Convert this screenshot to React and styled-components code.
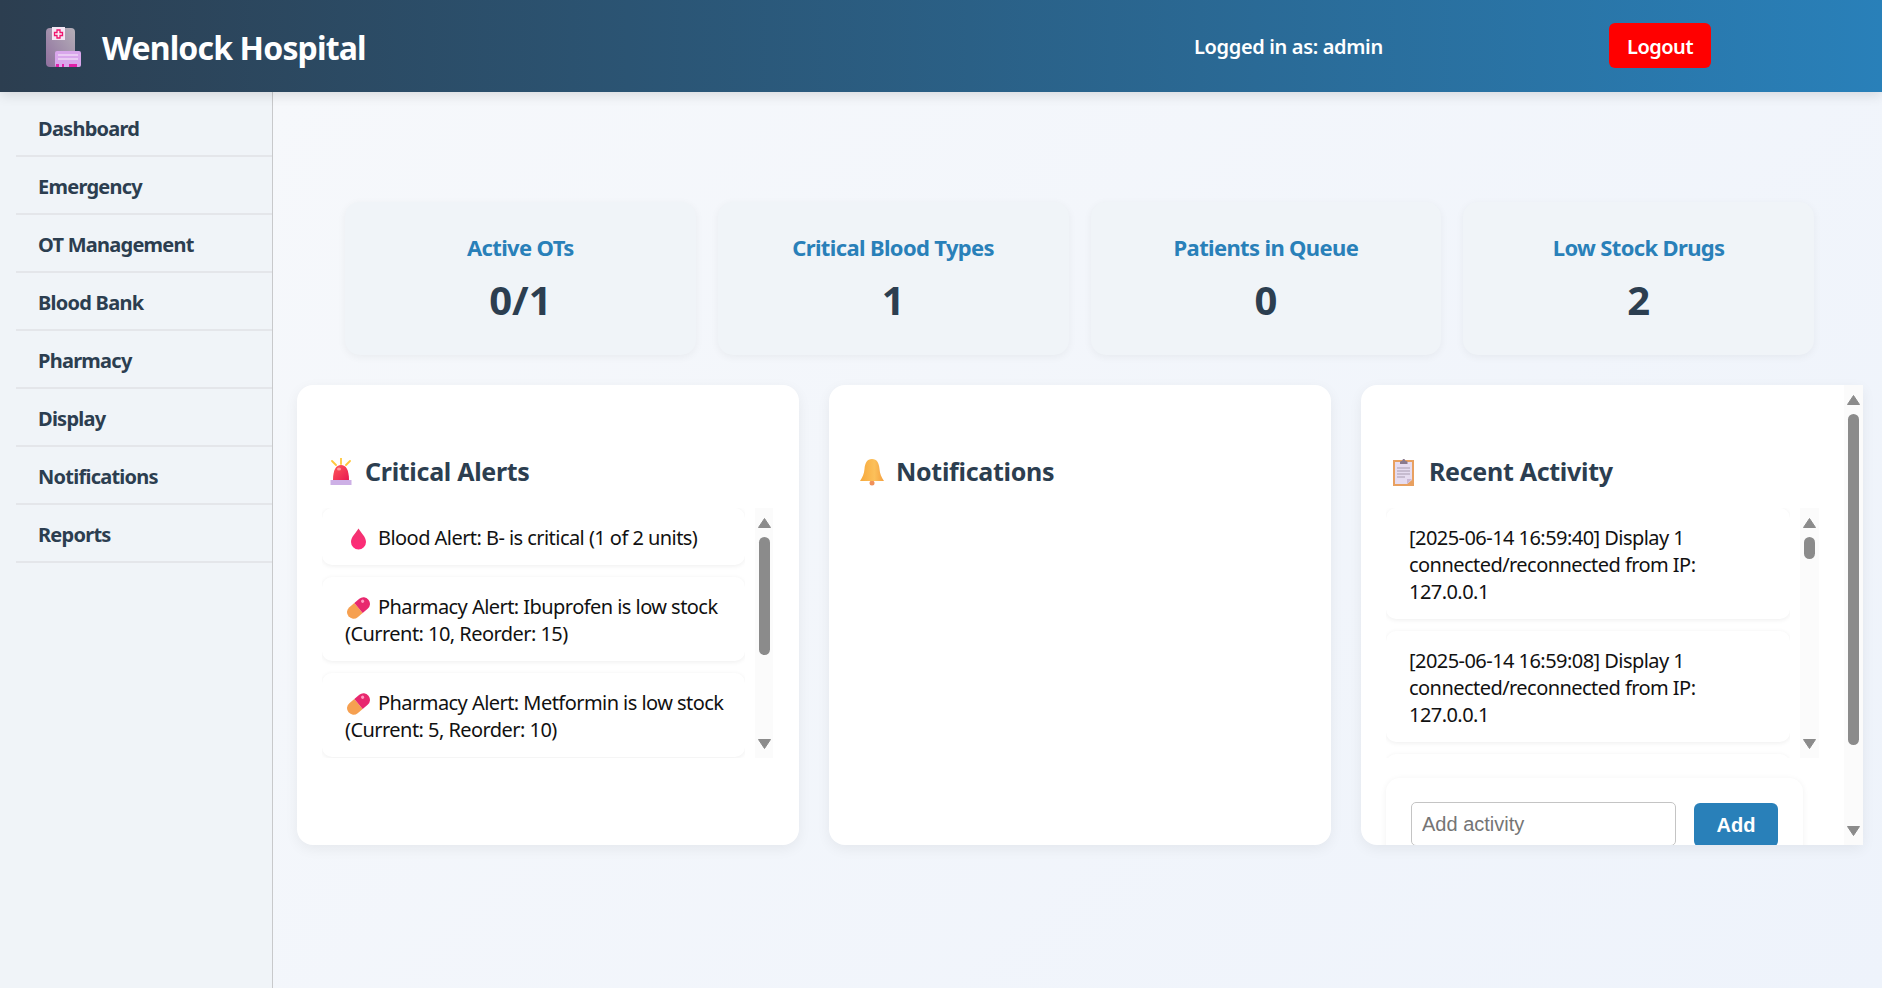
import React from "react";
import styled, { createGlobalStyle } from "styled-components";

const FONT = `"Noto Sans", "Open Sans", sans-serif`;

const Global = createGlobalStyle`
  * { box-sizing: border-box; }
  html, body { margin: 0; height: 100%; overflow: hidden; }
  body { font-family: ${FONT}; color: #2c3e50; background: #f0f4f8; }
`;

const Page = styled.div`display: flex; flex-direction: column; height: 988px; overflow: hidden;`;
const Header = styled.header`
  position: relative; z-index: 2; flex: 0 0 92px; display: flex; align-items: center;
  padding-left: 46px; color: #fff;
  background: linear-gradient(90deg, #2c3e50, #2980b9);
  box-shadow: 0 3px 12px rgba(0,0,0,.12);
`;
const Brand = styled.h1`
  margin: 3px 0 0 20px; font-size: 32px; font-weight: 700; letter-spacing: -0.85px; line-height: 44px;
  width: 1092px; flex: none;
`;
const LoggedIn = styled.span`font-size: 20px; font-weight: 600; letter-spacing: -0.35px; width: 415px; flex: none; margin-top: 1px;`;
const Logout = styled.button`
  width: 102px; height: 45px; margin-top: -2px; padding: 2px 0 0; border: 0; border-radius: 6px; background: #f00; color: #fff;
  font: 600 20px ${FONT}; letter-spacing: -0.5px;
`;
const Body = styled.div`flex: 1; display: flex; min-height: 0;`;
const Sidebar = styled.nav`
  flex: 0 0 273px; padding: 7px 0 0 16px; background: #f0f4f8; border-right: 1px solid #c8c9cb;
`;
const NavItem = styled.div`
  height: 58px; padding: 3px 0 0 22px; display: flex; align-items: center;
  border-bottom: 2px solid #e4e6ea; font-size: 20px; font-weight: 700; letter-spacing: -0.75px; color: #2c3e50;
`;
const Main = styled.main`
  flex: 1; min-width: 0; padding: 110px 0 0 24px;
  background: linear-gradient(135deg, #f6f8fb 0%, #eef3fb 100%);
`;
const Stats = styled.section`
  display: grid; grid-template-columns: repeat(4, 1fr); gap: 22px; width: 1469px; margin-left: 48px;
`;
const StatCard = styled.div`
  height: 153px; padding-top: 29px; text-align: center; background: #f0f4f8; border-radius: 15px;
  box-shadow: 0 2px 8px rgba(0,0,0,.05);
`;
const StatLabel = styled.div`font-size: 22px; font-weight: 700; letter-spacing: -0.65px; color: #2980b9; line-height: 32px;`;
const StatValue = styled.div`font-size: 40px; font-weight: 700; color: #2c3e50; line-height: 54px; margin-top: 10px;`;
const Panels = styled.section`
  display: grid; grid-template-columns: repeat(3, 502px); gap: 30px; margin-top: 30px;
`;
const Panel = styled.div`
  height: 460px; padding: 0 25px; background: #fff; border-radius: 16px;
  box-shadow: 0 4px 14px rgba(0,0,0,.06);
`;
const ScrollPanel = styled.div`
  height: 460px; display: flex; padding-left: 25px; overflow: hidden; background: #fff;
  border-radius: 16px 0 0 16px; box-shadow: 0 4px 14px rgba(0,0,0,.06);
`;
const ScrollContent = styled.div`flex: 1; min-width: 0; padding-right: 25px;`;
const PanelTitle = styled.h3`
  margin: 0; height: 123px; padding-top: 68px; display: flex; align-items: flex-start; font-size: 25px; font-weight: 700;
  letter-spacing: -0.3px; color: #2c3e50; line-height: 36px; white-space: nowrap;
`;
const TitleIcon = styled.svg`flex: none; width: 26px; height: 28px; margin: 5px 10px 0 ${p => p.$left || 6}px;`;
const List = styled.div`height: 250px; display: flex; gap: 10px; margin-right: ${p => p.$inset || 0}px;`;
const Items = styled.div`flex: 1; min-width: 0; overflow: hidden;`;
const Item = styled.div`
  min-height: ${p => (p.$blank ? "111px" : "0")};
  padding: 16px ${p => (p.$compact ? "10px" : "23px")} 14px 23px; margin-bottom: 12px; background: #fff; border-radius: 10px;
  box-shadow: 0 1px 5px rgba(0,0,0,.07);
  font-size: 20px; line-height: 27px; color: #111; letter-spacing: -0.55px;
`;
const InlineIcon = styled.svg`display: inline-block; width: 27px; height: 24px; margin-right: 6px; vertical-align: -6px;`;
const Track = styled.div`
  flex: none; width: ${p => p.$width}px; display: flex; flex-direction: column; align-items: center; background: #fbfbfb;
`;
const ArrowBox = styled.div`flex: none; height: 29px; width: 13px; display: flex; align-items: ${p => (p.$down ? "flex-end" : "flex-start")};
  padding: ${p => (p.$down ? "0 0 9px" : "10px 0 0")};`;
const ThumbArea = styled.div`flex: 1; min-height: 0;`;
const Thumb = styled.div`width: 11px; border-radius: 6px; background: #8b8b8b;`;
const AddForm = styled.form`
  width: 417px; height: 120px; margin-top: 20px; padding: 24px 25px 0; display: flex; gap: 18px; align-items: flex-start;
  background: #fff; border-radius: 14px; box-shadow: 0 1px 6px rgba(0,0,0,.06);
`;
const AddInput = styled.input`
  width: 265px; height: 44px; padding: 0 10px; border: 1px solid #c4c4c4; border-radius: 5px;
  font: 20px "Liberation Sans", Arial, sans-serif; background: #fff;
  &::placeholder { color: #757575; }
`;
const AddButton = styled.button`
  width: 84px; height: 44px; border: 0; border-radius: 6px; background: #2980b9; color: #fff;
  font: 700 20px "Liberation Sans", Arial, sans-serif; margin-top: 1px; padding: 0;
`;

const Arrow = ({ down }) => (
  <ArrowBox $down={down}>
    <svg width="13" height="10" viewBox="0 0 13 10" aria-hidden="true">
      <path d={down ? "M.5.500h12L6.500 9.500z" : "M6.500.5l6 9H.5z"} fill="#8b8b8b" stroke="#8b8b8b" strokeLinejoin="round" />
    </svg>
  </ArrowBox>
);
const Scrollbar = ({ width = 18, thumb }) => (
  <Track $width={width}>
    <Arrow />
    <ThumbArea><Thumb style={{ height: thumb }} /></ThumbArea>
    <Arrow down />
  </Track>
);

const Hospital = () => (
  <svg width="36" height="40" viewBox="0 0 36 40" style={{ flex: "none", marginTop: 2 }} aria-hidden="true">
    <defs>
      <linearGradient id="hb" x1="0" x2="1" y1="1" y2="0"><stop offset="0" stopColor="#8f6f9e" /><stop offset="1" stopColor="#b5b0b8" /></linearGradient>
    </defs>
    <rect x="0" y="1" width="29" height="39" rx="4" fill="url(#hb)" />
    <rect x="6" y="0" width="13" height="13" fill="#f4e6f4" />
    <path d="M11 3h3v2.500h2.500v3H14V11h-3V8.500H8.500v-3H11z" fill="#f8f0f8" stroke="#f0146e" strokeWidth="1.300" />
    <rect x="9" y="24" width="26" height="16" rx="2" fill="#d9a6ec" />
    <path d="M12 28h20M12 32h20" stroke="#f0d8f6" strokeWidth="1.500" />
    <path d="M10 37h3v3h-3zM16 37h2v3h-2zM23 37h8v3h-8z" fill="#e020a8" />
  </svg>
);
const Siren = () => (
  <TitleIcon $left={7} viewBox="0 0 26 28" aria-hidden="true">
    <defs><linearGradient id="sr" x1="0" x2="1" y1="0" y2="1"><stop offset="0" stopColor="#ff5a5a" /><stop offset="1" stopColor="#e81850" /></linearGradient></defs>
    <path d="M12 0v6M3 3l4 4M21 3l-4 4" stroke="#ffc83c" strokeWidth="1.800" strokeLinecap="round" />
    <path d="M4 22C4 12 7 7 12 7s8 5 8 15z" fill="url(#sr)" />
    <ellipse cx="10" cy="11" rx="2" ry="1.500" fill="#ff9a9a" />
    <rect x="1.500" y="22" width="21" height="5" fill="#cdb0e6" />
  </TitleIcon>
);
const Bell = () => (
  <TitleIcon $left={6} viewBox="0 0 26 28" aria-hidden="true">
    <defs><linearGradient id="bl" x1="0" x2="1"><stop offset="0" stopColor="#f6a83c" /><stop offset=".6" stopColor="#fcc05a" /><stop offset="1" stopColor="#f4a040" /></linearGradient></defs>
    <circle cx="12" cy="25" r="2.500" fill="#f0905a" />
    <path d="M12 1c5 0 7 4 7.500 10 .4 5 2 8 4.500 12H0c2.500-4 4.100-7 4.500-12C5 5 7 1 12 1z" fill="url(#bl)" />
  </TitleIcon>
);
const Clipboard = () => (
  <TitleIcon $left={7} viewBox="0 0 26 28" aria-hidden="true">
    <rect x="0" y="2" width="21" height="26" fill="#e8a060" />
    <path d="M2 4h17v18l-5 4H2z" fill="#e6dcf0" />
    <path d="M14 26l5-5h-5z" fill="#cbb8d4" />
    <path d="M7 4c0-1 1-1 2-1l1-2h1.500l1 2c1 0 2 0 2 1v2H7z" fill="#8a7a8e" />
    <path d="M4 10h13M4 13h13M4 16h13M4 19h8" stroke="#a89cb0" strokeWidth="1" />
  </TitleIcon>
);
const Drop = () => (
  <InlineIcon viewBox="0 0 27 24" aria-hidden="true">
    <defs><linearGradient id="dr" x1="0" x2="0" y1="0" y2="1"><stop offset="0" stopColor="#f0346e" /><stop offset="1" stopColor="#ff2a7a" /></linearGradient></defs>
    <path d="M13.500 1.500c3 5 7.500 8.500 7.500 13.500a7.500 7.500 0 0 1-15 0c0-5 4.500-8.500 7.500-13.500z" fill="url(#dr)" />
  </InlineIcon>
);
const Pill = () => (
  <InlineIcon viewBox="0 0 27 24" aria-hidden="true">
    <g transform="rotate(-40 13.500 12)">
      <path d="M13.500 5.500H7a6.500 6.500 0 0 0 0 13h6.500z" fill="#f6a050" />
      <path d="M13.500 5.500H20a6.500 6.500 0 0 1 0 13h-6.500z" fill="#e8286e" />
      <circle cx="21" cy="9.500" r="1.600" fill="#ff9ac0" />
    </g>
  </InlineIcon>
);

const navItems = ["Dashboard", "Emergency", "OT Management", "Blood Bank", "Pharmacy", "Display", "Notifications", "Reports"];
const stats = [["Active OTs", "0/1"], ["Critical Blood Types", "1"], ["Patients in Queue", "0"], ["Low Stock Drugs", "2"]];
const activity = ["[2025-06-14 16:59:40] Display 1 connected/reconnected from IP: 127.0.0.1", "[2025-06-14 16:59:08] Display 1 connected/reconnected from IP: 127.0.0.1"];

export default function App() {
  return (
    <Page>
      <Global />
      <Header>
        <Hospital />
        <Brand>Wenlock Hospital</Brand>
        <LoggedIn>Logged in as: admin</LoggedIn>
        <Logout type="button">Logout</Logout>
      </Header>
      <Body>
        <Sidebar>{navItems.map(n => <NavItem key={n}>{n}</NavItem>)}</Sidebar>
        <Main>
          <Stats>
            {stats.map(([l, v]) => (
              <StatCard key={l}><StatLabel>{l}</StatLabel><StatValue>{v}</StatValue></StatCard>
            ))}
          </Stats>
          <Panels>
            <Panel>
              <PanelTitle><Siren />Critical Alerts</PanelTitle>
              <List $inset={1}>
                <Items>
                  <Item $compact><Drop />Blood Alert: B- is critical (1 of 2 units)</Item>
                  <Item $compact><Pill />Pharmacy Alert: Ibuprofen is low stock (Current: 10, Reorder: 15)</Item>
                  <Item $compact><Pill />Pharmacy Alert: Metformin is low stock (Current: 5, Reorder: 10)</Item>
                </Items>
                <Scrollbar thumb={118} />
              </List>
            </Panel>
            <Panel>
              <PanelTitle><Bell />Notifications</PanelTitle>
            </Panel>
            <ScrollPanel>
              <ScrollContent>
                <PanelTitle><Clipboard />Recent Activity</PanelTitle>
                <List>
                  <Items>
                    {activity.map(a => <Item key={a}>{a}</Item>)}
                    <Item $blank />
                  </Items>
                  <Scrollbar width={19} thumb={22} />
                </List>
                <AddForm onSubmit={e => e.preventDefault()}>
                  <AddInput placeholder="Add activity" />
                  <AddButton type="submit">Add</AddButton>
                </AddForm>
              </ScrollContent>
              <Scrollbar width={19} thumb={331} />
            </ScrollPanel>
          </Panels>
        </Main>
      </Body>
    </Page>
  );
}
